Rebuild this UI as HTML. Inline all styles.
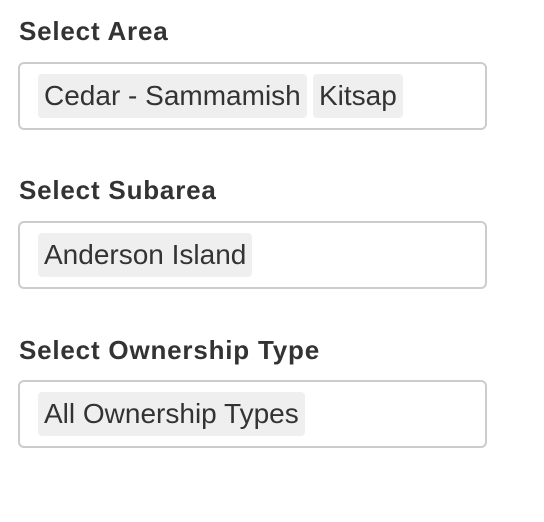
<!DOCTYPE html>
<html><head><style>
body{margin:0;width:544px;height:522px;background:#fff;font-family:"Liberation Sans",Arial,sans-serif;color:#333;}
.lbl{position:absolute;left:19px;font-weight:bold;font-size:26px;line-height:28px;letter-spacing:0.8px;}
.box{position:absolute;left:18px;width:465px;height:64px;border:2px solid #ccc;border-radius:6px;}
.tag{position:absolute;top:10px;height:44px;background:#efefef;border-radius:4px;font-size:28px;line-height:44px;padding:0 6px;box-sizing:border-box;white-space:nowrap;}
</style></head><body>
<div class="lbl" style="top:17px">Select Area</div>
<div class="box" style="top:62px">
<div class="tag" style="left:18px;width:269px">Cedar - Sammamish</div>
<div class="tag" style="left:293px;width:90px">Kitsap</div>
</div>
<div class="lbl" style="top:176px">Select Subarea</div>
<div class="box" style="top:221px">
<div class="tag" style="left:18px;width:214px">Anderson Island</div>
</div>
<div class="lbl" style="top:336px">Select Ownership Type</div>
<div class="box" style="top:380px">
<div class="tag" style="left:18px;width:267px">All Ownership Types</div>
</div>
</body></html>
